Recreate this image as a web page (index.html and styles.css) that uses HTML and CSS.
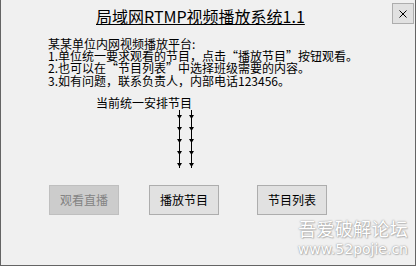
FILE: index.html
```html
<!DOCTYPE html>
<html lang="zh-CN">
<head>
<meta charset="utf-8">
<title>局域网RTMP视频播放系统1.1</title>
<link rel="stylesheet" href="styles.css">
</head>
<body>
<div class="window">
  <header class="titlebar">
    <h1 class="title">局域网RTMP视频播放系统1.1</h1>
    <button class="close" aria-label="关闭">
      <svg width="8" height="8" viewBox="0 0 8 8"><path d="M0.5 0.5 L7.5 7.5 M7.5 0.5 L0.5 7.5" stroke="#000" stroke-width="1" fill="none"/></svg>
    </button>
  </header>
  <div class="intro">
    <p>某某单位内网视频播放平台:</p>
    <p>1.单位统一要求观看的节目，点击“播放节目”按钮观看。</p>
    <p>2.也可以在“节目列表”中选择班级需要的内容。</p>
    <p>3.如有问题，联系负责人，内部电话123456。</p>
  </div>
  <div class="current">当前统一安排节目</div>
  <svg class="arrows" width="24" height="60" viewBox="0 0 24 60">
    <g stroke="#000" stroke-width="1" fill="none">
      <path d="M5.5 1 V59 M17.5 1 V59"/>
    </g>
    <g fill="#000">
      <polygon points="3,6 8,6 5.5,10"/>
      <polygon points="3,18 8,18 5.5,22"/>
      <polygon points="3,30 8,30 5.5,34"/>
      <polygon points="3,42 8,42 5.5,46"/>
      <polygon points="3,54 8,54 5.5,58"/>
      <polygon points="15,6 20,6 17.5,10"/>
      <polygon points="15,18 20,18 17.5,22"/>
      <polygon points="15,30 20,30 17.5,34"/>
      <polygon points="15,42 20,42 17.5,46"/>
      <polygon points="15,54 20,54 17.5,58"/>
    </g>
  </svg>
  <div class="buttons">
    <button class="btn btn-disabled" disabled>观看直播</button>
    <button class="btn btn-play">播放节目</button>
    <button class="btn btn-list">节目列表</button>
  </div>
  <div class="watermark">
    <div class="wm-cn">吾爱破解论坛</div>
    <div class="wm-en">www.52pojie.cn</div>
  </div>
</div>
</body>
</html>
```
FILE: styles.css
```css
html, body {
  margin: 0;
  padding: 0;
  background: #f0f0f0;
}
body {
  font-family: "Noto Sans CJK SC", "Noto Sans", sans-serif;
  color: #000;
}
.window {
  position: relative;
  width: 416px;
  height: 266px;
  box-sizing: border-box;
  border: 1px solid #646464;
  border-top: none;
  background: #f0f0f0;
  overflow: hidden;
}
.titlebar {
  display: flex;
  align-items: flex-start;
  height: 24px;
}
.title {
  margin: 8px 0 0 95px;
  font-size: 16px;
  line-height: 16px;
  font-weight: normal;
  text-decoration: underline;
  text-underline-offset: 1px;
  white-space: nowrap;
}
.close {
  margin: 3px 1px 0 auto;
  width: 22px;
  height: 21px;
  padding: 0;
  border: 1px solid #adadad;
  background: #e1e1e1;
  display: flex;
  align-items: center;
  justify-content: center;
}
.close svg {
  display: block;
}
.intro {
  margin-top: 14px;
  padding-left: 47px;
  font-size: 12px;
  line-height: 12.2px;
}
.intro p {
  margin: 0;
  white-space: nowrap;
}
.current {
  margin-top: 10px;
  padding-left: 95px;
  font-size: 12px;
  line-height: 12px;
}
.arrows {
  display: block;
  margin-left: 173px;
}
.buttons {
  display: flex;
  margin-top: 16px;
  padding-left: 48px;
}
.btn {
  width: 70px;
  height: 30px;
  padding: 0;
  box-sizing: border-box;
  border: 1px solid #adadad;
  background: #e1e1e1;
  font-family: "Noto Sans CJK SC", "Noto Sans", sans-serif;
  font-size: 12px;
  color: #000;
}
.btn-disabled {
  background: #cccccc;
  border-color: #bfbfbf;
  color: #838383;
}
.btn-play {
  margin-left: 30px;
}
.btn-list {
  margin-left: 38px;
}
.watermark {
  position: absolute;
  right: 7px;
  top: 217px;
  color: #ffffff;
  text-align: right;
  text-shadow: 0 0 2px #9a9a9a, 0 0 1px #b4b4b4, 1px 1px 1px #c4c4c4;
}
.wm-cn {
  font-size: 18px;
  line-height: 22px;
  letter-spacing: 0.3px;
}
.wm-en {
  font-family: "DejaVu Sans", sans-serif;
  font-size: 14px;
  line-height: 16px;
  margin-top: 2px;
}
```
